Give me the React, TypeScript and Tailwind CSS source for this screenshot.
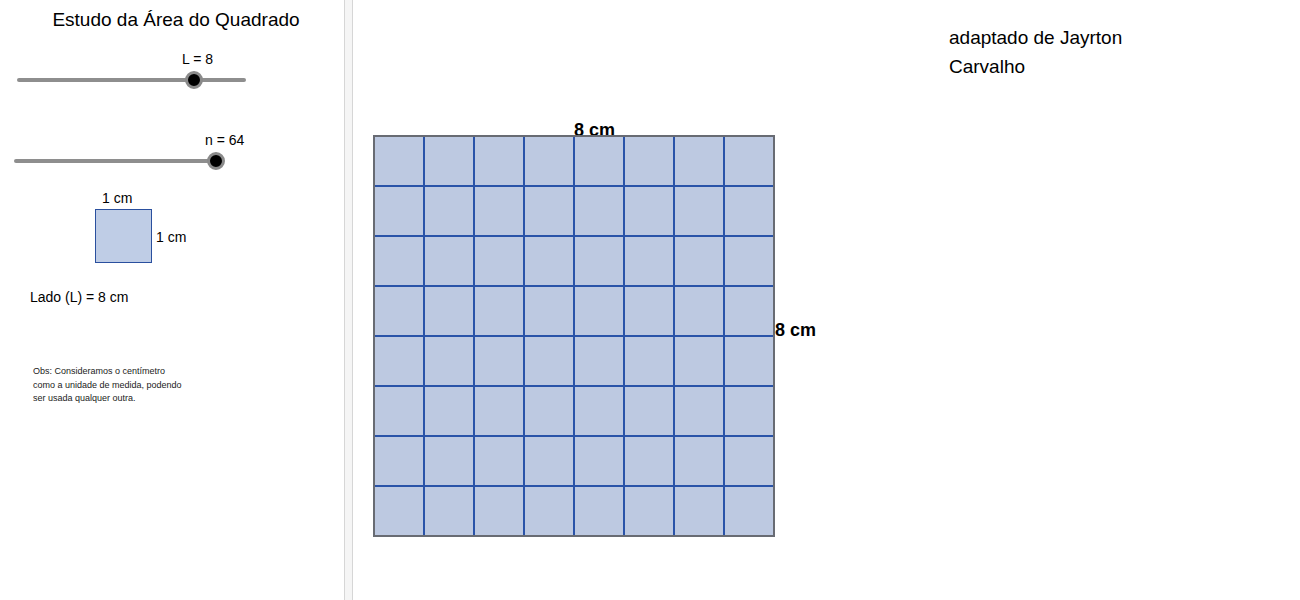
import React from 'react';

// GeoGebra style slider: grey track with the point sitting on it
function Slider({ label, className, labelClass, knobClass }: { label: string; className: string; labelClass: string; knobClass: string }) {
  return (
    <div className={'flex flex-col ' + className}>
      <div className={'whitespace-nowrap text-[14px] leading-none ' + labelClass}>{label}</div>
      <div className="relative h-[4px] rounded-full bg-[#8e8e8e] mt-[12px]">
        <div className={'absolute -top-[7px] h-[18px] w-[18px] rounded-full bg-black border-[3px] border-[#8a8a8a] ' + knobClass} />
      </div>
    </div>
  );
}

function Grid() {
  const n = 8;
  const s = 50;
  const lines = [];
  for (let i = 1; i < n; i++) {
    lines.push(<line key={'v' + i} x1={i * s + 1} y1={1} x2={i * s + 1} y2={n * s + 1} stroke="#2a53a8" strokeWidth={2} />);
    lines.push(<line key={'h' + i} x1={1} y1={i * s + 1} x2={n * s + 1} y2={i * s + 1} stroke="#2a53a8" strokeWidth={2} />);
  }
  return (
    <svg width={n * s + 2} height={n * s + 2} className="block shrink-0">
      <rect x={1} y={1} width={n * s} height={n * s} fill="#bdc9e1" />
      {lines}
      <rect x={1} y={1} width={n * s} height={n * s} fill="none" stroke="#686b73" strokeWidth={2} />
    </svg>
  );
}

export default function App() {
  return (
    <div className="flex h-[600px] w-[1300px] overflow-hidden bg-white text-black font-['Liberation_Sans',Arial,sans-serif]">
      {/* left panel */}
      <div className="flex w-[344px] shrink-0 flex-col">
        <h1 className="mt-[10px] pl-[8px] text-center text-[19px] font-normal leading-none">Estudo da Área do Quadrado</h1>

        <Slider label="L = 8" className="mt-[23px] ml-[17px] w-[229px]" labelClass="ml-[165px]" knobClass="left-[168px]" />
        <Slider label="n = 64" className="mt-[51px] ml-[14px] w-[208px]" labelClass="ml-[191px]" knobClass="left-[193px]" />

        <div className="mt-[28px] ml-[102px] text-[14px] leading-none">1 cm</div>
        <div className="mt-[4px] ml-[95px] flex items-start gap-[4px]">
          <div className="h-[54px] w-[57px] border-[1.5px] border-[#2a4f9e] bg-[#bfcde6]" />
          <div className="mt-[21px] text-[14px] leading-none">1 cm</div>
        </div>

        <div className="mt-[27px] ml-[30px] text-[14px] leading-none">Lado (L) = 8 cm</div>

        <p className="mt-[61px] ml-[33px] text-[9px] leading-[13.5px] text-[#222]">
          Obs: Consideramos o centímetro
          <br />
          como a unidade de medida, podendo
          <br />
          ser usada qualquer outra.
        </p>
      </div>

      {/* splitter */}
      <div className="h-full w-[9px] shrink-0 border-x border-[#d6d6d6] bg-[#f5f5f5]" />

      {/* graphics view */}
      <div className="flex flex-1 flex-col">
        <div className="mt-[23px] ml-[596px] text-[19px] leading-[29px]">
          adaptado de Jayrton
          <br />
          Carvalho
        </div>

        <div className="mt-[40px] ml-[20px] flex flex-col">
          <div className="ml-[201px] h-[14px] text-[18px] font-bold leading-none">8 cm</div>
          <div className="flex items-start">
            <Grid />
            <div className="mt-[186px] text-[18px] font-bold leading-none">8 cm</div>
          </div>
        </div>
      </div>
    </div>
  );
}
